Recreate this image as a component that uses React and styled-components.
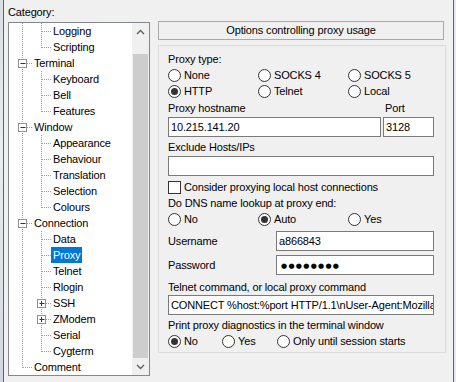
import React from "react";
import styled, { createGlobalStyle } from "styled-components";

const GlobalStyle = createGlobalStyle`
  html, body {
    margin: 0;
    padding: 0;
    background: #f0f0f0;
  }
  body {
    font-family: "Liberation Sans", Arial, sans-serif;
    font-size: 11px;
    letter-spacing: -0.15px;
    color: #000;
  }
`;

const TREE = [
  { label: "Logging", level: 2 },
  { label: "Scripting", level: 2, last: true },
  { label: "Terminal", level: 1, expander: "minus" },
  { label: "Keyboard", level: 2 },
  { label: "Bell", level: 2 },
  { label: "Features", level: 2, last: true },
  { label: "Window", level: 1, expander: "minus" },
  { label: "Appearance", level: 2 },
  { label: "Behaviour", level: 2 },
  { label: "Translation", level: 2 },
  { label: "Selection", level: 2 },
  { label: "Colours", level: 2, last: true },
  { label: "Connection", level: 1, expander: "minus" },
  { label: "Data", level: 2 },
  { label: "Proxy", level: 2, selected: true },
  { label: "Telnet", level: 2 },
  { label: "Rlogin", level: 2 },
  { label: "SSH", level: 2, expander: "plus" },
  { label: "ZModem", level: 2, expander: "plus" },
  { label: "Serial", level: 2 },
  { label: "Cygterm", level: 2, last: true },
  { label: "Comment", level: 1, last: true },
];

const DOT = { stroke: "#a0a0a0", strokeWidth: 1, strokeDasharray: "1 1" };

// expander box centred at x (pixel), y = 8
const Expander = ({ x, kind }) => (
  <g>
    <rect x={x - 3.5} y={4.5} width={8} height={8} fill="#fff" stroke="#919191" />
    <line x1={x - 1.5} y1={8.5} x2={x + 3.5} y2={8.5} stroke="#333" />
    {kind === "plus" && <line x1={x + 0.5} y1={6} x2={x + 0.5} y2={11} stroke="#333" />}
  </g>
);

const Guides = ({ level, last, expander }) => (
  <GuideSvg width="44" height="16" viewBox="0 0 44 16">
    {/* root level vertical */}
    {level === 2 || !last ? (
      <line x1="13.5" y1="0" x2="13.5" y2="16" {...DOT} />
    ) : (
      <line x1="13.5" y1="0" x2="13.5" y2="9" {...DOT} />
    )}
    {level === 1 && <line x1={expander ? 18 : 14} y1="8.5" x2="24" y2="8.5" {...DOT} />}
    {level === 1 && expander && <Expander x={13} kind={expander} />}
    {level === 2 && (
      <>
        <line x1="32.5" y1="0" x2="32.5" y2={last ? 9 : 16} {...DOT} />
        <line x1={expander ? 37 : 33} y1="8.5" x2="43" y2="8.5" {...DOT} />
        {expander && <Expander x={32} kind={expander} />}
      </>
    )}
  </GuideSvg>
);

function App() {
  return (
    <>
      <GlobalStyle />
      <Screen>
        <EdgeLeft />
        <Dialog>
          <LeftCol>
            <CategoryLabel>Category:</CategoryLabel>
            <TreeBox>
              <TreeList>
                {TREE.map((item) => (
                  <TreeRow key={item.label} $level={item.level}>
                    <Guides {...item} />
                    <TreeLabel $selected={item.selected}>{item.label}</TreeLabel>
                  </TreeRow>
                ))}
              </TreeList>
              <ScrollBar>
                <ScrollArrow>
                  <svg width="9" height="6" viewBox="0 0 9 6">
                    <path d="M1 5 L4.5 1.5 L8 5" fill="none" stroke="#606060" strokeWidth="1.4" />
                  </svg>
                </ScrollArrow>
                <ScrollTrack>
                  <ScrollThumb />
                </ScrollTrack>
                <ScrollArrow>
                  <svg width="9" height="6" viewBox="0 0 9 6">
                    <path d="M1 1 L4.5 4.5 L8 1" fill="none" stroke="#606060" strokeWidth="1.4" />
                  </svg>
                </ScrollArrow>
              </ScrollBar>
            </TreeBox>
          </LeftCol>

          <RightCol>
            <Header>Options controlling proxy usage</Header>
            <Group>
              <Label>Proxy type:</Label>
              <RadioRow>
                <Radio $w={90}>None</Radio>
                <Radio $w={90}>SOCKS 4</Radio>
                <Radio $w={90}>SOCKS 5</Radio>
              </RadioRow>
              <RadioRow>
                <Radio $w={90} checked>HTTP</Radio>
                <Radio $w={90}>Telnet</Radio>
                <Radio $w={90}>Local</Radio>
              </RadioRow>

              <FieldRow $mt={1}>
                <Label $w={215}>Proxy hostname</Label>
                <Label $pl={2}>Port</Label>
              </FieldRow>
              <FieldRow $mt={1}>
                <TextBox $w={213}>10.215.141.20</TextBox>
                <TextBox $ml={2}>3128</TextBox>
              </FieldRow>

              <Label $mt={2}>Exclude Hosts/IPs</Label>
              <FieldRow $mt={1}>
                <TextBox />
              </FieldRow>

              <CheckRow>
                <CheckBox />
                Consider proxying local host connections
              </CheckRow>

              <Label>Do DNS name lookup at proxy end:</Label>
              <RadioRow>
                <Radio $w={90}>No</Radio>
                <Radio $w={90} checked>Auto</Radio>
                <Radio $w={90}>Yes</Radio>
              </RadioRow>

              <FieldRow $mt={4}>
                <InlineLabel $w={108}>Username</InlineLabel>
                <TextBox>a866843</TextBox>
              </FieldRow>
              <FieldRow $mt={4}>
                <InlineLabel $w={108}>Password</InlineLabel>
                <TextBox>
                  <Masked>●●●●●●●●</Masked>
                </TextBox>
              </FieldRow>

              <Label $mt={4}>Telnet command, or local proxy command</Label>
              <FieldRow>
                <TextBox>{"CONNECT %host:%port HTTP/1.1\\nUser-Agent:Mozilla"}</TextBox>
              </FieldRow>

              <Label $mt={2}>Print proxy diagnostics in the terminal window</Label>
              <RadioRow>
                <Radio $w={54} checked>No</Radio>
                <Radio $w={55}>Yes</Radio>
                <Radio>Only until session starts</Radio>
              </RadioRow>
            </Group>
          </RightCol>
        </Dialog>
        <EdgeRight />
      </Screen>
    </>
  );
}

const Radio = ({ checked, children, $w }) => (
  <RadioItem $w={$w}>
    <RadioCircle $checked={checked} />
    {children}
  </RadioItem>
);

export default App;

const Screen = styled.div`
  width: 456px;
  height: 382px;
  display: flex;
  overflow: hidden;
  background: #f0f0f0;
`;

const EdgeLeft = styled.div`
  flex: none;
  width: 3px;
  background: linear-gradient(180deg, #d9dfe6, #e9edf1 40%, #cfd8e0);
  border-right: 1px solid #2e6eae;
`;

const EdgeRight = styled.div`
  flex: none;
  width: 2px;
  background: #e4e9ee;
  border-left: 1px solid #2e6eae;
`;

const Dialog = styled.div`
  flex: 1;
  display: flex;
  padding-left: 4px;
`;

const LeftCol = styled.div`
  flex: none;
  width: 142px;
  display: flex;
  flex-direction: column;
`;

const CategoryLabel = styled.div`
  height: 22px;
  padding-top: 5px;
  box-sizing: border-box;
  line-height: 14px;
`;

const TreeBox = styled.div`
  height: 354px;
  box-sizing: border-box;
  border: 1px solid #828790;
  background: #fff;
  display: flex;
`;

const TreeList = styled.div`
  flex: 1;
  overflow: hidden;
`;

const TreeRow = styled.div`
  position: relative;
  height: 16px;
  padding-left: ${(p) => (p.$level === 1 ? 23 : 42)}px;
  display: flex;
  align-items: center;
  white-space: nowrap;
`;

const GuideSvg = styled.svg`
  position: absolute;
  left: 0;
  top: 0;
`;

const TreeLabel = styled.span`
  position: relative;
  height: 16px;
  line-height: 16px;
  padding: 0 2px;
  background: ${(p) => (p.$selected ? "#0078d7" : "transparent")};
  color: ${(p) => (p.$selected ? "#fff" : "#000")};
`;

const ScrollBar = styled.div`
  flex: none;
  width: 17px;
  background: #f0f0f0;
  display: flex;
  flex-direction: column;
`;

const ScrollArrow = styled.div`
  height: 17px;
  display: flex;
  align-items: center;
  justify-content: center;
`;

const ScrollTrack = styled.div`
  flex: 1;
  padding: 14px 1px 0;
`;

const ScrollThumb = styled.div`
  height: 304px;
  background: #cdcdcd;
`;

const RightCol = styled.div`
  flex: none;
  width: 288px;
  margin-left: 8px;
  padding-top: 21px;
  display: flex;
  flex-direction: column;
`;

const Header = styled.div`
  width: 286px;
  height: 19px;
  box-sizing: border-box;
  border: 1px solid #a9a9a9;
  text-align: center;
  line-height: 17px;
`;

const Group = styled.div`
  margin-top: 5px;
  width: 288px;
  height: 308px;
  box-sizing: border-box;
  border: 1px solid #dcdcdc;
  padding: 5px 11px 0 9px;
  display: flex;
  flex-direction: column;
`;

const Label = styled.div`
  height: 16px;
  line-height: 16px;
  margin-top: ${(p) => p.$mt || 0}px;
  padding-left: ${(p) => p.$pl || 0}px;
  width: ${(p) => (p.$w ? `${p.$w}px` : "auto")};
  flex: none;
  white-space: nowrap;
`;

const InlineLabel = styled.div`
  flex: none;
  width: ${(p) => p.$w}px;
  line-height: 20px;
`;

const FieldRow = styled.div`
  display: flex;
  margin-top: ${(p) => p.$mt || 0}px;
`;

const TextBox = styled.div`
  height: 20px;
  box-sizing: border-box;
  border: 1px solid #7a7a7a;
  background: #fff;
  padding: 0 2px;
  line-height: 18px;
  white-space: nowrap;
  overflow: hidden;
  margin-left: ${(p) => p.$ml || 0}px;
  ${(p) => (p.$w ? `width: ${p.$w}px; flex: none;` : "flex: 1;")}
`;

const Masked = styled.span`
  font-family: "DejaVu Sans", sans-serif;
  font-size: 7px;
  letter-spacing: 1.3px;
  padding-left: 2px;
  vertical-align: 1px;
`;

const RadioRow = styled.div`
  display: flex;
  height: 16px;
  align-items: center;
`;

const RadioItem = styled.div`
  display: flex;
  align-items: center;
  gap: 3px;
  white-space: nowrap;
  ${(p) => (p.$w ? `width: ${p.$w}px; flex: none;` : "flex: 1;")}
`;

const RadioCircle = styled.span`
  position: relative;
  flex: none;
  width: 13px;
  height: 13px;
  box-sizing: border-box;
  border: 1px solid #333;
  border-radius: 50%;
  background: #fff;
  &::after {
    content: "";
    display: ${(p) => (p.$checked ? "block" : "none")};
    position: absolute;
    left: 2px;
    top: 2px;
    width: 7px;
    height: 7px;
    border-radius: 50%;
    background: #333;
  }
`;

const CheckRow = styled.div`
  display: flex;
  align-items: center;
  gap: 3px;
  height: 16px;
  margin-top: 3px;
`;

const CheckBox = styled.span`
  flex: none;
  width: 13px;
  height: 13px;
  box-sizing: border-box;
  border: 1px solid #333;
  background: #fff;
`;
